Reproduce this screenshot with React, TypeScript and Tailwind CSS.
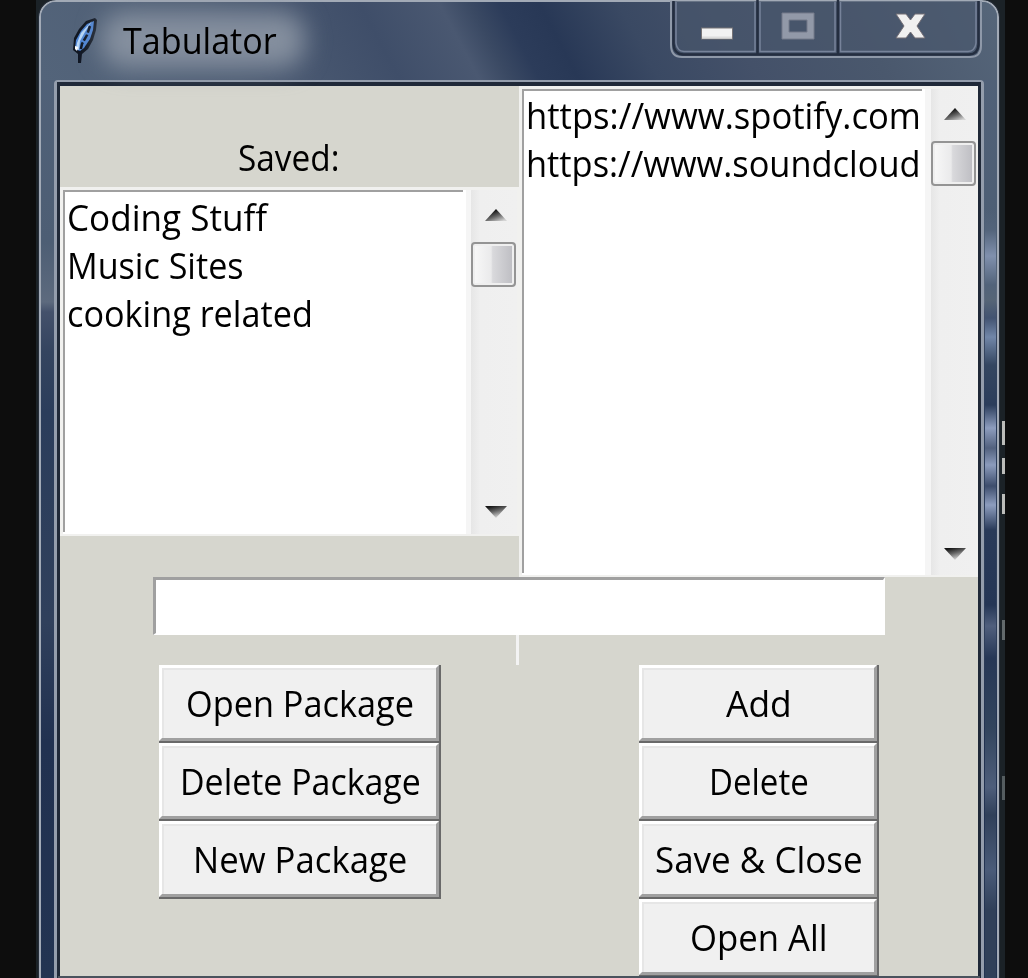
import React, { useLayoutEffect, useRef, useState } from "react";

/* A line of text condensed horizontally to a given width. */
function Label({ text, width }: { text: string; width: number }) {
  const ref = useRef<HTMLSpanElement>(null);
  const [scale, setScale] = useState(0.9);
  useLayoutEffect(() => {
    if (ref.current) setScale(width / ref.current.offsetWidth);
  }, [text, width]);
  return (
    <span className="flex h-12" style={{ width }}>
      <span
        ref={ref}
        className="inline-block h-12 shrink-0 origin-left whitespace-pre leading-[48px]"
        style={{ transform: `scaleX(${scale})` }}
      >
        {text}
      </span>
    </span>
  );
}

function Arrow({ down = false }: { down?: boolean }) {
  const id = down ? "arrow-down" : "arrow-up";
  return (
    <svg width="24" height="14" viewBox="0 0 24 14" className="block shrink-0">
      <defs>
        {down ? (
          <linearGradient id={id} x1="0.2" y1="0" x2="0.7" y2="1">
            <stop offset="0.05" stopColor="#161616" />
            <stop offset="0.45" stopColor="#666" />
            <stop offset="0.9" stopColor="#d4d4d4" />
          </linearGradient>
        ) : (
          <linearGradient id={id} x1="0.2" y1="0" x2="0.9" y2="1">
            <stop offset="0.2" stopColor="#161616" />
            <stop offset="0.55" stopColor="#666" />
            <stop offset="0.95" stopColor="#d4d4d4" />
          </linearGradient>
        )}
      </defs>
      <path d={down ? "M1 1H23L12 13Z" : "M12 1L23 13H1Z"} fill={`url(#${id})`} />
    </svg>
  );
}

function ScrollBar({ className }: { className: string }) {
  return (
    <div className={`flex shrink-0 flex-col items-center bg-gradient-to-r from-[#e6e6e6] via-[#efefef] via-20% to-[#f0f0f0] ${className}`}>
      <div className="pl-[3px] pt-px">
        <Arrow />
      </div>
      <div className="mr-px mt-5 h-[45px] w-[45px] shrink-0 rounded-[4px] border-2 border-[#949494] bg-[linear-gradient(90deg,#f7f7f7_5%,#eaeaeb_44%,#d9d9dc_48%,#bfbfc4_95%)] shadow-[inset_0_0_0_2px_#efefef]" />
      <div className="grow" />
      <div className="pl-[3px]">
        <Arrow down />
      </div>
    </div>
  );
}

function ListBox({ items, className }: { items: { text: string; width: number }[]; className: string }) {
  return (
    <div className={`flex flex-col overflow-hidden bg-white ${className}`}>
      {items.map((i) => (
        <Label key={i.text} {...i} />
      ))}
    </div>
  );
}

function Button({ text, width }: { text: string; width: number }) {
  return (
    <button className="flex h-[78px] w-full shrink-0 border-b-2 border-r-2 border-[#696969] text-black">
      <span className="flex h-full w-full items-center justify-center border-b-[3px] border-l-[3px] border-r-[3px] border-t-[3px] border-b-[#a0a0a0] border-l-white border-r-[#a0a0a0] border-t-white bg-[#f0f0f0] pb-px pl-[2px] shadow-[inset_2px_2px_0_#e6e6e6]">
        <Label text={text} width={width} />
      </span>
    </button>
  );
}

function Feather() {
  return (
    <svg width="26" height="48" viewBox="0 0 26 48" className="block">
      <path d="M23 1L25 3L24 13L21 23L16 32L10 37L9 46H6L6 37L1 33L2 21L7 12L14 4Z" fill="#111722" />
      <path d="M22 4L21 13L18 22L12 31L8 34L3 32L4 23L9 14L15 7Z" fill="#4f86d6" />
      <path d="M20 4L9 16L5 26L4 32L7 33L8 24L13 15Z" fill="#b9d8f8" />
      <path d="M18 9L15 18L10 27L7.500 38V45" fill="none" stroke="#101725" strokeWidth="2.500" strokeDasharray="7 2" />
      <path d="M3 29L6 30L5 34L3 32Z" fill="#fff" />
    </svg>
  );
}

function WindowControls() {
  return (
    <svg width="318" height="62" viewBox="0 0 318 62" className="block">
      <path d="M3 1V45Q3 57 14 57H302Q313 57 313 46V1" fill="#48566c" fillOpacity="0.65" stroke="#8f99a9" strokeWidth="2" />
      <path d="M5.500 1V44Q6 54 15 54.500H301Q310 54 310.500 45V1" fill="none" stroke="#242e40" strokeWidth="2.500" />
      <g fill="none" stroke="#77839a" strokeWidth="1.500">
        <path d="M8 2V43Q9 51 16 51.500H87V2" />
        <path d="M92 2V51.500H167V2" />
        <path d="M172.500 2V51.500H300Q307 51 308 43V2" />
      </g>
      <path d="M89.500 0V54M170 0V54" stroke="#242e40" strokeWidth="2.500" />
      <rect x="33.500" y="28" width="31" height="11" fill="#f2f2f2" stroke="#777477" />
      <path d="M34 37.500H64" stroke="#ddd" strokeWidth="2" />
      <path fillRule="evenodd" d="M114 13H146V39H114ZM121 20V32H139V20Z" fill="#9299a8" stroke="#747b8a" />
      <path d="M228 14H238L242.500 20L247 14H257L249 26L257 38H247L242.500 32L238 38H228L236 26Z" fill="#f0f0f0" stroke="#736e75" strokeWidth="1" />
    </svg>
  );
}

const packages = [
  { text: "Coding Stuff", width: 200 },
  { text: "Music Sites", width: 177 },
  { text: "cooking related", width: 246 },
];
const sites = [
  { text: "https://www.spotify.com", width: 395 },
  { text: "https://www.soundcloud", width: 395 },
];

export default function App() {
  return (
    <div className="relative h-[978px] w-[1028px] overflow-hidden bg-[#0d0d0d] pl-9 font-['Open_Sans','Noto_Sans',sans-serif] text-[37px] text-black">
      <div className="h-full w-[969px] bg-[#1b2227] pl-[3px]">
        <div className="flex h-[1000px] w-[960px] flex-col rounded-t-[17px] border-2 border-[#a2aab6] bg-[linear-gradient(180deg,#52627a_0px,#4d5e74_240px,#5d6a7e_300px,#44516b_310px,#34445f_350px,#2b3d5b_410px,#30405c_620px,#213150_740px,#233452_978px)] outline outline-1 outline-[#252d39]">
          <header className="flex h-[78px] shrink-0 items-start justify-between rounded-t-[15px] bg-[linear-gradient(62deg,#53647a_0%,#4f5e75_20%,#3f4e69_36%,#4a5871_44%,#3a4963_47%,#2c3c5a_50%,#283856_54%,#3a4963_62%,#445169_72%,#4a586d_85%,#56667a_100%)]">
            <div className="flex pl-[31px] pt-[15px]">
              <Feather />
              <div className="relative -mt-px ml-[7px] h-[48px] pl-[18px] pr-6">
                <div className="absolute -inset-x-1 -inset-y-1 rounded-[24px] bg-[#8b95a3]/90 blur-[12px]" />
                <div className="relative">
                  <Label text="Tabulator" width={154} />
                </div>
              </div>
            </div>
            <div className="-mt-0.5 mr-[11px]">
              <WindowControls />
            </div>
          </header>
          <div className="flex w-full pl-[13px]">
            <div className="h-[920px] w-[930px] shrink-0 rounded-t-[4px] border-[3px] border-t-2 border-[#949dac]">
              <main className="h-[896px] w-[924px] border-x-[3px] border-t-[4px] border-[#202938] bg-[#d6d6ce]">
                <div className="grid grid-cols-2">
                  <section className="flex h-[491px] flex-col">
                    <div className="flex h-[101px] justify-center pr-[3px] pt-[47px]">
                      <Label text="Saved:" width={101} />
                    </div>
                    <div className="flex h-[349px] border-2 border-l-[3px] border-t-[3px] border-[#f1f1ef] bg-white">
                      <ListBox items={packages} className="mb-[2px] w-[400px] border-l-2 border-t-2 border-[#a0a0a0] pl-[2px] pt-px" />
                      <div className="ml-[3px] w-[5px] bg-[#f5f5f5]" />
                      <ScrollBar className="w-[46px] grow pb-[15px] pt-[17px]" />
                    </div>
                  </section>
                  <section className="flex h-[491px] border-2 border-l-[3px] border-t-[3px] border-[#f1f1ef] bg-white">
                    <ListBox items={sites} className="mb-[2px] w-[400px] border-l-2 border-t-2 border-[#a0a0a0] pl-[2px]" />
                    <div className="ml-[3px] w-[6px] bg-[#f5f5f5]" />
                    <ScrollBar className="w-[45px] grow pb-[14px] pt-[17px]" />
                  </section>
                </div>
                <div className="ml-[93px] h-[58px] w-[732px] border-2 border-l-[3px] border-t-[3px] border-b-white border-l-[#a0a0a0] border-r-white border-t-[#a0a0a0] bg-white" />
                <div className="ml-[456px] h-[30px] w-[3px] bg-[#f3f3f3]" />
                <div className="flex items-start pl-[99px]">
                  <div className="w-[282px]">
                    <Button text="Open Package" width={228} />
                    <Button text="Delete Package" width={241} />
                    <Button text="New Package" width={214} />
                  </div>
                  <div className="ml-[198px] w-[240px]">
                    <Button text="Add" width={66} />
                    <Button text="Delete" width={100} />
                    <Button text="Save & Close" width={208} />
                    <Button text="Open All" width={138} />
                  </div>
                </div>
              </main>
            </div>
          </div>
        </div>
      </div>
      <div className="absolute left-[985px] top-[210px] h-[768px] w-[11px] bg-[linear-gradient(180deg,transparent_0px,#53647b_20px,#8090ad_46px,#52637a_75px,#566577_90px,#425371_108px,#7186a8_127px,#344661_155px,#2b3d5b_195px,#8d9dbe_218px,#52617e_238px,#8b9bbc_255px,#3d4d6c_276px,#8d9dbe_295px,#293a59_320px,#253655_395px,#505f7d_416px,#263756_448px,#32445d_518px,#4e5e7b_577px,#304059_605px,#4a5b79_660px,#304059_700px)]" />
      <div className="absolute left-[1002px] top-[421px] h-6 w-[3px] bg-[#bcbdba]" />
      <div className="absolute left-[1002px] top-[458px] h-4 w-[3px] bg-[#bcbdba]" />
      <div className="absolute left-[1002px] top-[494px] h-5 w-[3px] bg-[#bcbdba]" />
      <div className="absolute left-[1002px] top-[620px] h-5 w-[3px] bg-[#62696b]" />
      <div className="absolute left-[1002px] top-[776px] h-6 w-[3px] bg-[#555d60]" />
      <div className="absolute left-[58px] top-[976px] h-[2px] w-[922px] bg-[#4a535d]" />
    </div>
  );
}
